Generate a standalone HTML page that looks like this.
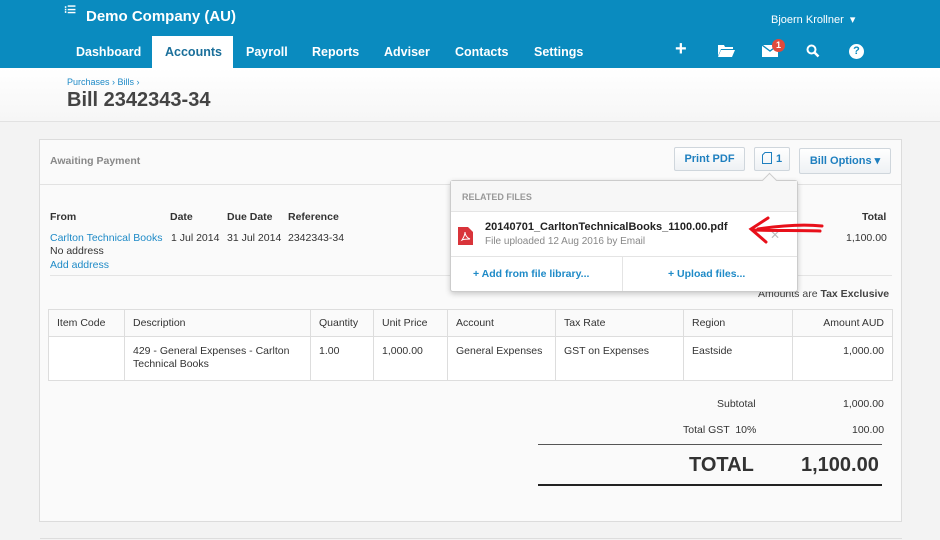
<!DOCTYPE html>
<html><head><meta charset="utf-8"><style>
*{box-sizing:border-box;margin:0;padding:0}
body{width:940px;height:540px;overflow:hidden;background:#f3f3f3;font-family:"Liberation Sans",Arial,sans-serif;font-size:10.5px;color:#333;position:relative}
.abs{position:absolute}
#hdr{left:0;top:0;width:940px;height:68px;background:#0a8bbf}
.nav{color:#fff;font-weight:bold;font-size:12.5px;top:45px}
#sub{left:0;top:68px;width:940px;height:54px;background:linear-gradient(#fff,#f6f6f6);border-bottom:1px solid #e2e2e2}
#panel{left:39px;top:139px;width:863px;height:383px;background:#fafafa;border:1px solid #dcdcdc}
.lnk{color:#1e8ac7}
.btn{background:linear-gradient(#fff,#eef1f4);border:1px solid #cfd6dc;border-radius:2px;color:#1e7fbf;font-weight:bold;font-size:11px;text-align:center}
table{border-collapse:collapse;font-size:10.5px}
td{border:1px solid #ddd;padding:0 8px;vertical-align:top;line-height:13px}
.b{font-weight:bold}
</style></head><body>
<div id="hdr" class="abs"></div>
<div class="abs" style="left:64px;top:9px;color:#fff;font-size:10px;line-height:4px;font-weight:bold">⁝☰</div>
<div class="abs" style="left:86px;top:8px;color:#fff;font-size:15px;font-weight:bold">Demo Company (AU)</div>
<div class="abs" style="left:771px;top:13px;color:#fff;font-size:11px">Bjoern Krollner &nbsp;▾</div>
<div class="abs" style="left:152px;top:36px;width:81px;height:33px;background:#fff"></div>
<div class="abs nav" style="left:76px">Dashboard</div>
<div class="abs nav" style="left:165px;color:#1a6f9a">Accounts</div>
<div class="abs nav" style="left:246px">Payroll</div>
<div class="abs nav" style="left:312px">Reports</div>
<div class="abs nav" style="left:384px">Adviser</div>
<div class="abs nav" style="left:455px">Contacts</div>
<div class="abs nav" style="left:534px">Settings</div>
<div class="abs" style="left:675px;top:38px;color:#fff;font-size:20px;font-weight:bold">+</div>
<svg class="abs" style="left:718px;top:44px" width="17" height="13"><path d="M0 1h6l1 2h8v2H3L0 12z M3 6h14l-3 7H0z" fill="#fff"/></svg>
<svg class="abs" style="left:762px;top:45px" width="16" height="12"><rect width="16" height="12" fill="#fff"/><path d="M0 0l8 6 8-6" stroke="#0a8bbf" fill="none" stroke-width="1.3"/></svg>
<div class="abs" style="left:772px;top:39px;width:13px;height:13px;border-radius:50%;background:#e04a3c;color:#fff;font-size:9px;font-weight:bold;text-align:center;line-height:13px">1</div>
<svg class="abs" style="left:806px;top:44px" width="14" height="14"><circle cx="5.5" cy="5.5" r="4" stroke="#fff" stroke-width="2" fill="none"/><path d="M8.5 8.5l4 4" stroke="#fff" stroke-width="2.5"/></svg>
<div class="abs" style="left:849px;top:44px;width:15px;height:15px;border-radius:50%;background:#fff;color:#0a8bbf;font-size:11px;font-weight:bold;text-align:center;line-height:15px">?</div>
<div id="sub" class="abs"></div>
<div class="abs lnk" style="left:67px;top:77px;font-size:9px">Purchases › Bills ›</div>
<div class="abs" style="left:67px;top:89px;font-size:20px;font-weight:bold;color:#444">Bill 2342343-34</div>
<div id="panel" class="abs"></div>
<div class="abs" style="left:40px;top:184px;width:861px;border-top:1px solid #e2e2e2"></div>
<div class="abs b" style="left:50px;top:155px;color:#888">Awaiting Payment</div>
<div class="abs btn" style="left:674px;top:147px;width:71px;height:24px;line-height:22px">Print PDF</div>
<div class="abs btn" style="left:754px;top:147px;width:36px;height:24px;line-height:22px"><svg width="10" height="12" style="vertical-align:-2px;margin-right:4px"><path d="M3 .5h6.5v11H.5V3z" fill="none" stroke="#1e7fbf"/></svg>1</div>
<div class="abs btn" style="left:799px;top:148px;width:92px;height:26px;line-height:24px">Bill Options ▾</div>
<div class="abs b" style="left:50px;top:211px">From</div>
<div class="abs b" style="left:170px;top:211px">Date</div>
<div class="abs b" style="left:227px;top:211px">Due Date</div>
<div class="abs b" style="left:288px;top:211px">Reference</div>
<div class="abs b" style="left:862px;top:211px">Total</div>
<div class="abs lnk" style="left:50px;top:232px">Carlton Technical Books</div>
<div class="abs" style="left:171px;top:232px">1 Jul 2014</div>
<div class="abs" style="left:227px;top:232px">31 Jul 2014</div>
<div class="abs" style="left:288px;top:232px">2342343-34</div>
<div class="abs" style="left:846px;top:232px">1,100.00</div>
<div class="abs" style="left:50px;top:245px">No address</div>
<div class="abs lnk" style="left:50px;top:259px">Add address</div>
<div class="abs" style="left:50px;top:275px;width:842px;border-top:1px solid #e4e4e4"></div>
<div class="abs" style="left:758px;top:288px;color:#444">Amounts are <b>Tax Exclusive</b></div>
<table class="abs" style="left:48px;top:309px;width:845px">
<tr style="height:27px;background:#fafafa"><td style="width:76px;padding-top:7px">Item Code</td><td style="width:186px;padding-top:7px">Description</td><td style="width:63px;padding-top:7px">Quantity</td><td style="width:74px;padding-top:7px">Unit Price</td><td style="width:108px;padding-top:7px">Account</td><td style="width:128px;padding-top:7px">Tax Rate</td><td style="width:109px;padding-top:7px">Region</td><td style="text-align:right;padding-top:7px">Amount AUD</td></tr>
<tr style="height:44px;background:#fff"><td></td><td style="padding-top:8px">429 - General Expenses - Carlton Technical Books</td><td style="padding-top:8px">1.00</td><td style="padding-top:8px">1,000.00</td><td style="padding-top:8px">General Expenses</td><td style="padding-top:8px">GST on Expenses</td><td style="padding-top:8px">Eastside</td><td style="text-align:right;padding-top:8px">1,000.00</td></tr>
</table>
<div class="abs" style="left:717px;top:398px">Subtotal</div>
<div class="abs" style="left:843px;top:398px">1,000.00</div>
<div class="abs" style="left:683px;top:424px">Total GST &nbsp;10%</div>
<div class="abs" style="left:852px;top:424px">100.00</div>
<div class="abs" style="left:538px;top:444px;width:344px;border-top:1px solid #555"></div>
<div class="abs b" style="left:689px;top:454px;font-size:20px">TOTAL</div>
<div class="abs b" style="left:801px;top:454px;font-size:20px">1,100.00</div>
<div class="abs" style="left:538px;top:484px;width:344px;border-top:2px solid #222"></div>
<!-- popup -->
<div class="abs" style="left:450px;top:180px;width:348px;height:112px;background:#fff;border:1px solid #ccc;border-radius:3px;box-shadow:0 2px 6px rgba(0,0,0,.2)"></div>
<div class="abs" style="left:764px;top:175px;width:11px;height:11px;background:#f7f7f7;border-left:1px solid #ccc;border-top:1px solid #ccc;transform:rotate(45deg)"></div>
<div class="abs" style="left:451px;top:181px;width:346px;height:31px;background:#f7f7f7;border-bottom:1px solid #e4e4e4"></div>
<div class="abs b" style="left:462px;top:192px;font-size:9px;color:#999">RELATED FILES</div>
<svg class="abs" style="left:458px;top:227px" width="15" height="18"><path d="M0 0h10l5 5v13H0z" fill="#d9343a"/><path d="M4 13c2-3 3-6 3-8 0 3 2 6 5 7-3 0-6 0-8 1z" stroke="#fff" fill="none" stroke-width="1"/></svg>
<div class="abs b" style="left:485px;top:221px;font-size:11px;color:#222">20140701_CarltonTechnicalBooks_1100.00.pdf</div>
<div class="abs" style="left:485px;top:236px;font-size:10px;color:#888">File uploaded 12 Aug 2016 by Email</div>
<div class="abs" style="left:770px;top:228px;color:#bbb;font-size:12px">✕</div>
<div class="abs" style="left:451px;top:256px;width:346px;border-top:1px solid #e4e4e4"></div>
<div class="abs" style="left:622px;top:256px;height:35px;border-left:1px solid #e4e4e4"></div>
<div class="abs b lnk" style="left:473px;top:268px">+ Add from file library...</div>
<div class="abs b lnk" style="left:668px;top:268px">+ Upload files...</div>
<svg class="abs" style="left:748px;top:214px" width="76" height="30"><path d="M74 12C55 10 30 12 10 15 M72 17C50 16 30 17 4 16 M20 4L3 15 18 28" stroke="#e8101a" stroke-width="3" fill="none" stroke-linecap="round"/></svg>
<div class="abs" style="left:40px;top:538px;width:862px;border-top:1px solid #ddd"></div>
</body></html>
